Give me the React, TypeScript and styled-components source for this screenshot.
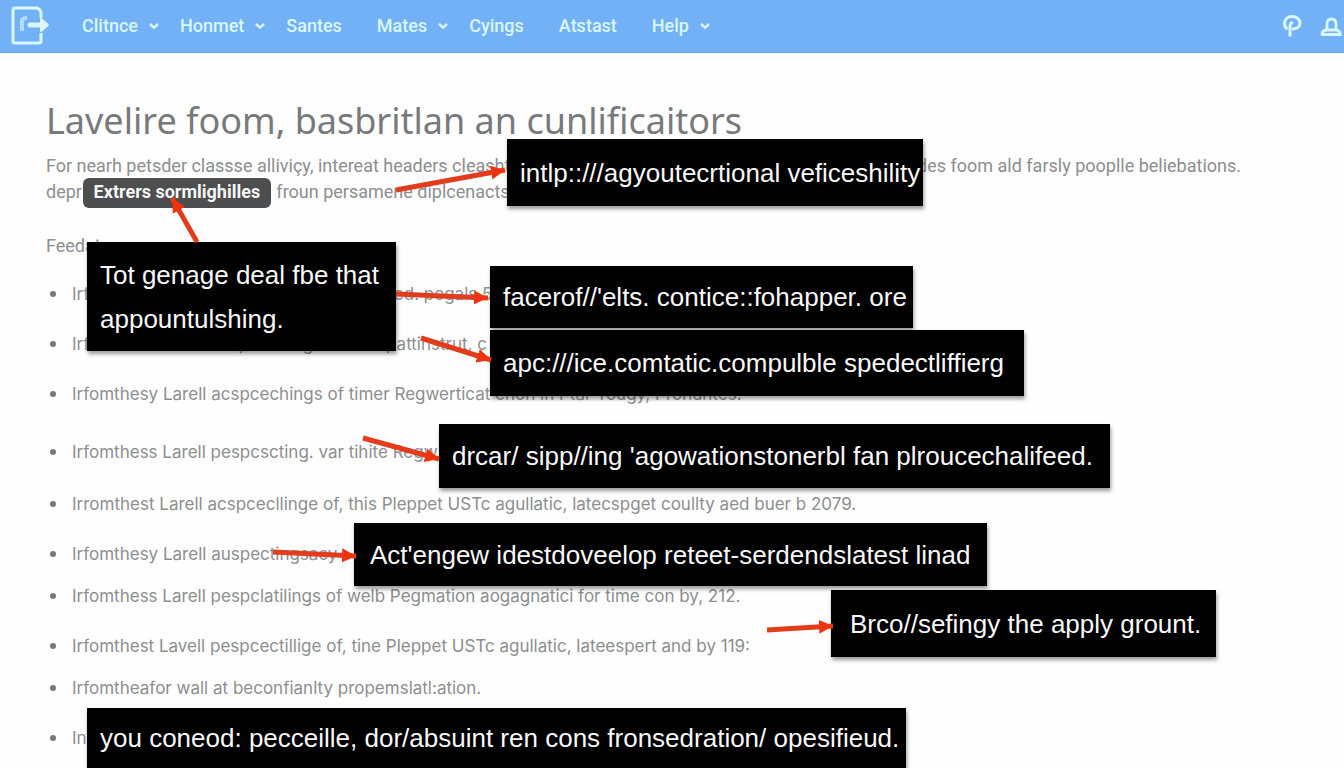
import React from "react";
import styled, { createGlobalStyle } from "styled-components";

const GlobalStyle = createGlobalStyle`
  * { box-sizing: border-box; }
  html, body { margin: 0; background: #fefefe; }
  body {
    font-family: Roboto, "Liberation Sans", sans-serif;
    color: #8c8e90;
    overflow: hidden;
  }
`;

const Page = styled.div`
  position: relative;
  min-height: 100vh;
`;

const TopBar = styled.header`
  display: flex;
  align-items: center;
  height: 53px;
  padding: 0 2px 0 10px;
  overflow: hidden;
  background: #73b1f7;
  border-bottom: 1px solid #6ba4e4;
  color: #d9f7fd;
`;

const Brand = styled.a`
  display: flex;
  width: 72px;
  flex: none;
  color: inherit;
`;

const Menu = styled.nav`
  display: flex;
  align-items: center;
  flex: 1;
  gap: 21px;
`;

const menuText = `
  font: 500 18px/24px Roboto, sans-serif;
  color: inherit;
  white-space: nowrap;
`;

const MenuButton = styled.button`
  ${menuText}
  display: flex;
  align-items: center;
  gap: 11px;
  padding: 0;
  border: 0;
  background: none;
`;

const MenuLink = styled.a`
  ${menuText}
  padding-right: 14px;
  text-decoration: none;
`;

const Tools = styled.div`
  display: flex;
  align-items: center;
  flex: none;
  gap: 16px;
`;

const ToolButton = styled.button`
  display: flex;
  padding: 0;
  border: 0;
  background: none;
  color: inherit;
`;

const Article = styled.main`
  padding: 44px 46px 0;
`;

const Title = styled.h1`
  margin: 0;
  font: 400 36px/48px "Noto Sans", sans-serif;
  color: #77797b;
  white-space: nowrap;
`;

const Intro = styled.p`
  margin: 8px 0 0;
  font-size: 18px;
  line-height: 26px;
  white-space: nowrap;
`;

const Term = styled.strong`
  display: inline-block;
  width: 188px;
  height: 30px;
  margin: -2px 1px;
  border-radius: 6px;
  background: #4c4e4f;
  color: #f6f6f6;
  font-weight: 700;
  line-height: 28px;
  text-align: center;
  vertical-align: middle;
`;

const Lead = styled.p`
  margin: 28px 0 0;
  font-size: 18px;
  line-height: 24px;
`;

const List = styled.ul`
  margin: 0;
  padding: 0;
  list-style: none;
`;

const Item = styled.li<{ $space: number }>`
  display: flex;
  align-items: center;
  gap: 16px;
  margin-top: ${(p) => p.$space}px;
  padding-left: 4px;
  font-family: Inter, sans-serif;
  font-size: 17px;
  line-height: 24px;
  white-space: pre;

  &::before {
    content: "";
    width: 6px;
    height: 6px;
    flex: none;
    border-radius: 50%;
    background: #77797b;
  }
`;

const Callout = styled.div<{
  $x: number;
  $y: number;
  $w: number;
  $h: number;
  $pad?: number;
}>`
  position: absolute;
  left: ${(p) => p.$x}px;
  top: ${(p) => p.$y}px;
  width: ${(p) => p.$w}px;
  height: ${(p) => p.$h}px;
  display: flex;
  align-items: center;
  padding-left: ${(p) => p.$pad ?? 13}px;
  background: #000;
  color: #f8f8f8;
  box-shadow: 1px 3px 4px rgba(0, 0, 0, 0.4);
  font-family: "Liberation Sans", Arial, sans-serif;
  font-size: 26px;
  line-height: 44px;
  white-space: pre;
`;

const Arrows = styled.svg`
  position: absolute;
  left: 0;
  top: 0;
  pointer-events: none;
`;

const Chevron = () => (
  <svg width="10" height="6" viewBox="0 0 10 6" fill="none" stroke="currentColor" strokeWidth="2.4" aria-hidden="true">
    <path d="M1 1l4 3.6L9 1" />
  </svg>
);

const menu = [
  { label: "Clitnce", drop: true },
  { label: "Honmet", drop: true },
  { label: "Santes", drop: false },
  { label: "Mates", drop: true },
  { label: "Cyings", drop: false },
  { label: "Atstast", drop: false },
  { label: "Help", drop: true },
];

const items = [
  { space: 24, text: "Irfomthess Larell acspcechings of timer ed. pegals 5" },
  { space: 26, text: "Irfomthess Larell acspcechings of lime pattinstrut, c" },
  { space: 26, text: "Irfomthesy Larell acspcechings of timer Regwerticat enon in Ptar Tougy, Pronuntes." },
  { space: 34, text: "Irfomthess Larell pespcscting. var tihite Regw" },
  { space: 28, text: "Irromthest Larell acspcecllinge of, this Pleppet USTc agullatic, latecspget coullty aed buer b 2079." },
  { space: 26, text: "Irfomthesy Larell auspectingsacy" },
  { space: 18, text: "Irfomthess Larell pespclatilings of welb Pegmation aogagnatici for time con by, 212." },
  { space: 26, text: "Irfomthest Lavell pespcectillige of, tine Pleppet USTc agullatic, lateespert and by 119:" },
  { space: 18, text: "Irfomtheafor wall at beconfianlty propemslatl:ation." },
  { space: 26, text: "Infomthess" },
];

const callouts = [
  { x: 507, y: 139, w: 416, h: 67, text: "intlp::///agyoutecrtional veficeshility" },
  { x: 87, y: 242, w: 309, h: 109, text: "Tot genage deal fbe that\nappountulshing." },
  { x: 490, y: 266, w: 423, h: 62, text: "facerof//'elts. contice::fohapper. ore" },
  { x: 490, y: 330, w: 534, h: 66, text: "apc:///ice.comtatic.compulble spedectliffierg" },
  { x: 439, y: 424, w: 671, h: 64, text: "drcar/ sipp//ing 'agowationstonerbl fan plroucechalifeed." },
  { x: 354, y: 523, w: 633, h: 63, pad: 16, text: "Act'engew idestdoveelop reteet-serdendslatest linad" },
  { x: 831, y: 590, w: 385, h: 67, pad: 19, text: "Brco//sefingy the apply grount." },
  { x: 87, y: 708, w: 819, h: 60, text: "you coneod: pecceille, dor/absuint ren cons fronsedration/ opesifieud." },
];

const arrows = [
  [396, 190, 505, 170],
  [197, 242, 172, 198],
  [396, 294, 488, 298],
  [421, 338, 491, 360],
  [363, 438, 439, 459],
  [273, 552, 356, 556],
  [767, 630, 833, 626],
];

export default function App() {
  return (
    <Page>
      <GlobalStyle />
      <TopBar>
        <Brand href="#" aria-label="Home">
          <svg width="40" height="40" viewBox="0 0 40 40" fill="none" stroke="currentColor" aria-hidden="true">
            <path d="M31 12V6.500Q30 2.500 26 2H5Q3 2 3 4v31q0 2 2 2h24q2 0 2-2v-8" strokeWidth="3" strokeLinejoin="round" />
            <path d="M12 25V15q0-3 5-3" strokeWidth="4" opacity=".6" />
            <path d="M20 19h13" strokeWidth="5" strokeLinecap="round" />
            <path d="M31 13l7 6-7 6z" strokeWidth="2" fill="currentColor" strokeLinejoin="round" />
          </svg>
        </Brand>
        <Menu>
          {menu.map((m) =>
            m.drop ? (
              <MenuButton key={m.label} type="button">
                {m.label}
                <Chevron />
              </MenuButton>
            ) : (
              <MenuLink key={m.label} href="#">
                {m.label}
              </MenuLink>
            )
          )}
        </Menu>
        <Tools>
          <ToolButton type="button" aria-label="Search">
            <svg width="24" height="24" viewBox="0 0 24 24" fill="none" stroke="currentColor" strokeWidth="3" aria-hidden="true">
              <path d="M7.500 15Q4.500 13.500 4.500 9.500C4.500 5 8 2.500 12 2.500s8 2.500 8 6.500-3.500 6-8 6M13 8.500q-3 .5-3 4v10" />
            </svg>
          </ToolButton>
          <ToolButton type="button" aria-label="Account">
            <svg width="22" height="24" viewBox="0 0 22 24" fill="none" stroke="currentColor" strokeWidth="2.800" aria-hidden="true">
              <path d="M7 16V10q0-5 4.500-5t4.500 5v6" />
              <path d="M2 20.500q0-4 5-4.500h9q4 .5 4.500 4.500z" strokeLinejoin="round" />
            </svg>
          </ToolButton>
        </Tools>
      </TopBar>

      <Article>
        <Title>Lavelire foom, basbritlan an cunlificaitors</Title>
        <Intro>
          For nearh petsder classse alliviçy, intereat headers cleashtings and the verious possible areas and incl. the codes foom ald farsly pooplle beliebations.
          <br />
          depr<Term>Extrers sormlighilles</Term> froun persamene diplcenacts
        </Intro>
        <Lead>Feedat</Lead>
        <List>
          {items.map((it) => (
            <Item key={it.text} $space={it.space}>
              {it.text}
            </Item>
          ))}
        </List>
      </Article>

      {callouts.map((c) => (
        <Callout key={c.text} $x={c.x} $y={c.y} $w={c.w} $h={c.h} $pad={c.pad}>
          {c.text}
        </Callout>
      ))}

      <Arrows width="1344" height="768" aria-hidden="true">
        <defs>
          <marker id="head" markerUnits="userSpaceOnUse" markerWidth="15" markerHeight="16" refX="14" refY="8" orient="auto">
            <path d="M0 1l14 7-14 7z" fill="#f0330f" />
          </marker>
        </defs>
        {arrows.map(([x1, y1, x2, y2]) => (
          <line key={`${x1}-${y1}`} x1={x1} y1={y1} x2={x2} y2={y2} stroke="#e23c1c" strokeWidth="5" markerEnd="url(#head)" />
        ))}
      </Arrows>
    </Page>
  );
}
